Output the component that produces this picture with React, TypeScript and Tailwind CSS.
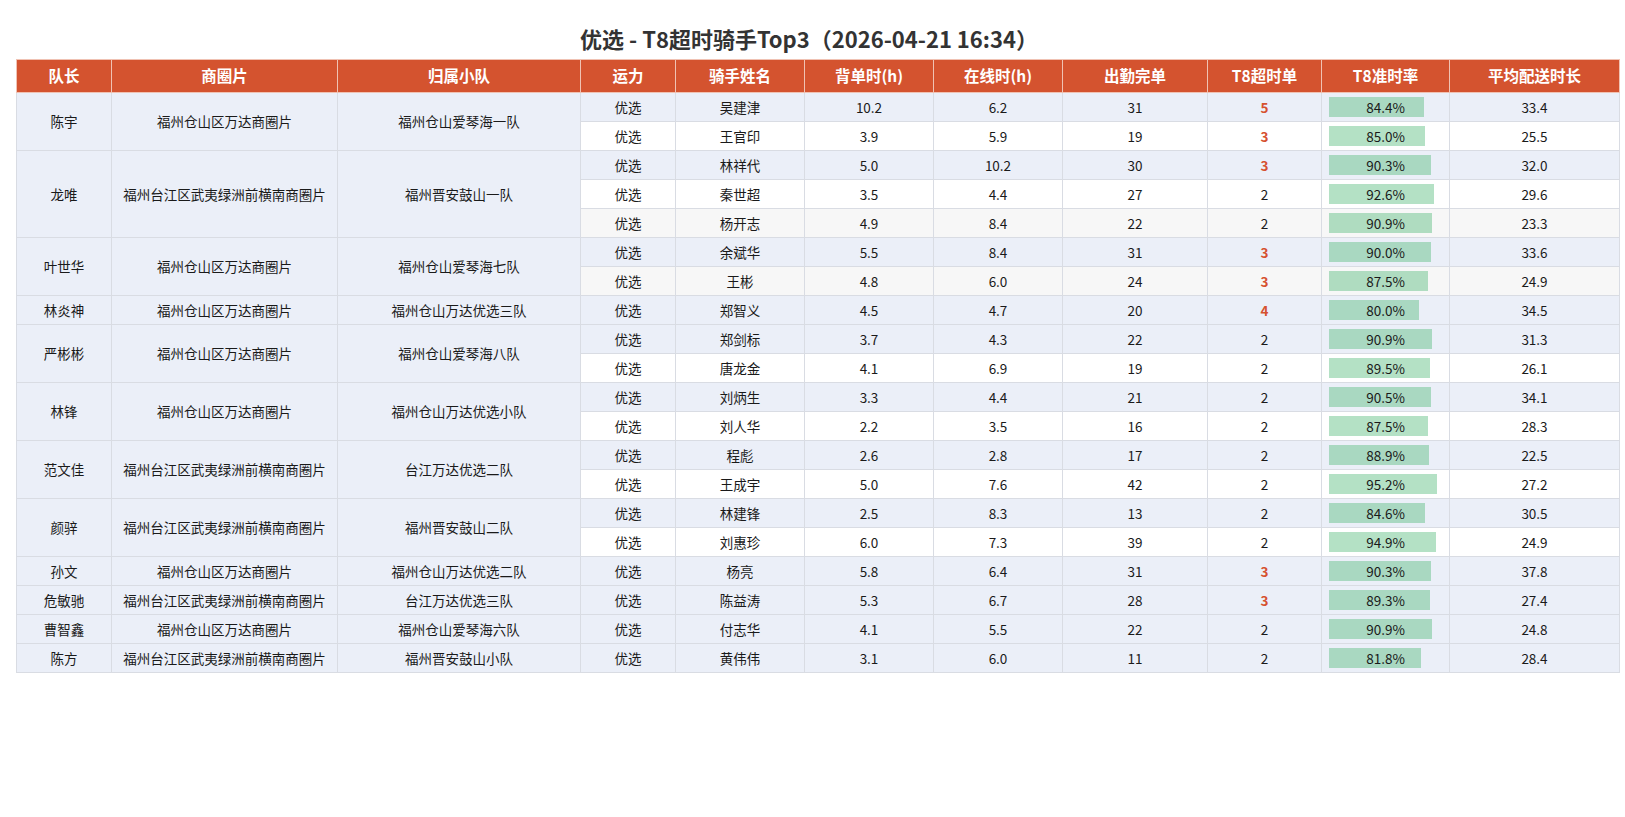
import React from "react";

type Rider = { name: string; bd: string; ol: string; done: number; t8: number; rate: number; avg: string; bg: string };
type Group = { leader: string; area: string; team: string; riders: Rider[] };

const B = "bg-[#ebeff8]";
const W = "bg-white";
const G = "bg-[#f7f7f7]";

const groups: Group[] = [
  { leader: "陈宇", area: "福州仓山区万达商圈片", team: "福州仓山爱琴海一队", riders: [
    { name: "吴建津", bd: "10.2", ol: "6.2", done: 31, t8: 5, rate: 84.4, avg: "33.4", bg: B },
    { name: "王官印", bd: "3.9", ol: "5.9", done: 19, t8: 3, rate: 85.0, avg: "25.5", bg: W },
  ] },
  { leader: "龙唯", area: "福州台江区武夷绿洲前横南商圈片", team: "福州晋安鼓山一队", riders: [
    { name: "林祥代", bd: "5.0", ol: "10.2", done: 30, t8: 3, rate: 90.3, avg: "32.0", bg: B },
    { name: "秦世超", bd: "3.5", ol: "4.4", done: 27, t8: 2, rate: 92.6, avg: "29.6", bg: W },
    { name: "杨开志", bd: "4.9", ol: "8.4", done: 22, t8: 2, rate: 90.9, avg: "23.3", bg: G },
  ] },
  { leader: "叶世华", area: "福州仓山区万达商圈片", team: "福州仓山爱琴海七队", riders: [
    { name: "余斌华", bd: "5.5", ol: "8.4", done: 31, t8: 3, rate: 90.0, avg: "33.6", bg: B },
    { name: "王彬", bd: "4.8", ol: "6.0", done: 24, t8: 3, rate: 87.5, avg: "24.9", bg: G },
  ] },
  { leader: "林炎神", area: "福州仓山区万达商圈片", team: "福州仓山万达优选三队", riders: [
    { name: "郑智义", bd: "4.5", ol: "4.7", done: 20, t8: 4, rate: 80.0, avg: "34.5", bg: B },
  ] },
  { leader: "严彬彬", area: "福州仓山区万达商圈片", team: "福州仓山爱琴海八队", riders: [
    { name: "郑剑标", bd: "3.7", ol: "4.3", done: 22, t8: 2, rate: 90.9, avg: "31.3", bg: B },
    { name: "唐龙金", bd: "4.1", ol: "6.9", done: 19, t8: 2, rate: 89.5, avg: "26.1", bg: W },
  ] },
  { leader: "林锋", area: "福州仓山区万达商圈片", team: "福州仓山万达优选小队", riders: [
    { name: "刘炳生", bd: "3.3", ol: "4.4", done: 21, t8: 2, rate: 90.5, avg: "34.1", bg: B },
    { name: "刘人华", bd: "2.2", ol: "3.5", done: 16, t8: 2, rate: 87.5, avg: "28.3", bg: W },
  ] },
  { leader: "范文佳", area: "福州台江区武夷绿洲前横南商圈片", team: "台江万达优选二队", riders: [
    { name: "程彪", bd: "2.6", ol: "2.8", done: 17, t8: 2, rate: 88.9, avg: "22.5", bg: B },
    { name: "王成宇", bd: "5.0", ol: "7.6", done: 42, t8: 2, rate: 95.2, avg: "27.2", bg: W },
  ] },
  { leader: "颜骍", area: "福州台江区武夷绿洲前横南商圈片", team: "福州晋安鼓山二队", riders: [
    { name: "林建锋", bd: "2.5", ol: "8.3", done: 13, t8: 2, rate: 84.6, avg: "30.5", bg: B },
    { name: "刘惠珍", bd: "6.0", ol: "7.3", done: 39, t8: 2, rate: 94.9, avg: "24.9", bg: W },
  ] },
  { leader: "孙文", area: "福州仓山区万达商圈片", team: "福州仓山万达优选二队", riders: [
    { name: "杨亮", bd: "5.8", ol: "6.4", done: 31, t8: 3, rate: 90.3, avg: "37.8", bg: B },
  ] },
  { leader: "危敏驰", area: "福州台江区武夷绿洲前横南商圈片", team: "台江万达优选三队", riders: [
    { name: "陈益涛", bd: "5.3", ol: "6.7", done: 28, t8: 3, rate: 89.3, avg: "27.4", bg: B },
  ] },
  { leader: "曹智鑫", area: "福州仓山区万达商圈片", team: "福州仓山爱琴海六队", riders: [
    { name: "付志华", bd: "4.1", ol: "5.5", done: 22, t8: 2, rate: 90.9, avg: "24.8", bg: B },
  ] },
  { leader: "陈方", area: "福州台江区武夷绿洲前横南商圈片", team: "福州晋安鼓山小队", riders: [
    { name: "黄伟伟", bd: "3.1", ol: "6.0", done: 11, t8: 2, rate: 81.8, avg: "28.4", bg: B },
  ] },
];

const headers = ["队长", "商圈片", "归属小队", "运力", "骑手姓名", "背单时(h)", "在线时(h)", "出勤完单", "T8超时单", "T8准时率", "平均配送时长"];
const widths = [95, 226, 243, 95, 129, 129, 129, 145, 114, 128, 170];

const td = "border border-[#d9dce3] text-center align-middle h-[29px] p-0";

export default function App() {
  return (
    <div
      className="w-[1625px] min-h-[817px] bg-white pt-[24px] text-[#1a1a1a]"
      style={{ fontFamily: '"Noto Sans CJK SC", "Noto Sans", sans-serif' }}
    >
      <div className="w-[1618px] text-center text-[22px] font-bold leading-[28px] text-[#333]">
        优选 - T8超时骑手Top3（2026-04-21 16:34）
      </div>
      <table className="ml-[16px] mt-[7px] w-[1603px] table-fixed border-collapse text-[13.5px]">
        <colgroup>
          {widths.map((w, i) => (
            <col key={i} style={{ width: w }} />
          ))}
        </colgroup>
        <thead>
          <tr>
            {headers.map((h) => (
              <th
                key={h}
                className="h-[33px] border border-[#f0c2b3] bg-[#d4532f] p-0 text-center align-middle text-[15.5px] font-bold text-white"
              >
                {h}
              </th>
            ))}
          </tr>
        </thead>
        <tbody>
          {groups.map((g) =>
            g.riders.map((r, i) => (
              <tr key={g.leader + r.name} className={r.bg}>
                {i === 0 && (
                  <>
                    <td rowSpan={g.riders.length} className={`${td} bg-[#ebeff8]`}>{g.leader}</td>
                    <td rowSpan={g.riders.length} className={`${td} bg-[#ebeff8]`}>{g.area}</td>
                    <td rowSpan={g.riders.length} className={`${td} bg-[#ebeff8]`}>{g.team}</td>
                  </>
                )}
                <td className={td}>优选</td>
                <td className={td}>{r.name}</td>
                <td className={td}>{r.bd}</td>
                <td className={td}>{r.ol}</td>
                <td className={td}>{r.done}</td>
                <td className={td}>
                  {r.t8 >= 3 ? (
                    <span className="font-bold text-[#d6512f]">{r.t8}</span>
                  ) : (
                    <span>{r.t8}</span>
                  )}
                </td>
                <td className={`${td} px-[7px]`}>
                  <div className="relative h-[20px]">
                    <div
                      className="absolute left-0 top-0 h-full bg-[#52b978]/[0.43]"
                      style={{ width: `${r.rate}%` }}
                    />
                    <div className="relative leading-[20px]">{r.rate.toFixed(1)}%</div>
                  </div>
                </td>
                <td className={td}>{r.avg}</td>
              </tr>
            ))
          )}
        </tbody>
      </table>
    </div>
  );
}
